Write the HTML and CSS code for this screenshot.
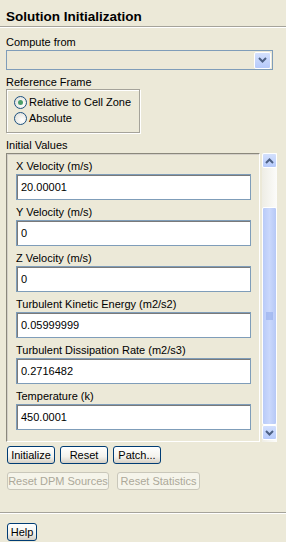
FILE: index.html
```html
<!DOCTYPE html>
<html lang="en">
<head>
  <meta charset="UTF-8">
  <title>Solution Initialization</title>
  <link rel="stylesheet" href="styles.css">
</head>
<body>

  <div class="title">Solution Initialization</div>

  <div class="section">
    <div class="label">Compute from</div>
    <div class="combo">
      <div class="combo-btn">
        <svg width="9" height="6" viewBox="0 0 9 6"><polyline points="1,1 4.5,4.5 8,1" fill="none" stroke="#4d6185" stroke-width="2"/></svg>
      </div>
    </div>

    <div class="label">Reference Frame</div>
    <div class="group">
      <div class="radio-row"><span class="radio checked"></span>Relative to Cell Zone</div>
      <div class="radio-row"><span class="radio"></span>Absolute</div>
    </div>

    <div class="label">Initial Values</div>
    <div class="scroll-area">
      <div class="pane">
        <div class="field">
          <div class="label">X Velocity (m/s)</div>
          <div class="input">20.00001</div>
        </div>
        <div class="field">
          <div class="label">Y Velocity (m/s)</div>
          <div class="input">0</div>
        </div>
        <div class="field">
          <div class="label">Z Velocity (m/s)</div>
          <div class="input">0</div>
        </div>
        <div class="field">
          <div class="label">Turbulent Kinetic Energy (m2/s2)</div>
          <div class="input">0.05999999</div>
        </div>
        <div class="field">
          <div class="label">Turbulent Dissipation Rate (m2/s3)</div>
          <div class="input">0.2716482</div>
        </div>
        <div class="field">
          <div class="label">Temperature (k)</div>
          <div class="input">450.0001</div>
        </div>
      </div>
      <div class="scrollbar">
        <div class="sb-btn">
          <svg width="9" height="6" viewBox="0 0 9 6"><polyline points="1,5 4.5,1.5 8,5" fill="none" stroke="#4d6185" stroke-width="2"/></svg>
        </div>
        <div class="sb-track">
          <div class="sb-space"></div>
          <div class="sb-thumb">
            <svg width="8" height="8" viewBox="0 0 8 8">
              <line x1="0" y1="1" x2="7" y2="1" stroke="#8aa5e8"/>
              <line x1="0" y1="3" x2="7" y2="3" stroke="#8aa5e8"/>
              <line x1="0" y1="5" x2="7" y2="5" stroke="#8aa5e8"/>
              <line x1="0" y1="7" x2="7" y2="7" stroke="#8aa5e8"/>
            </svg>
          </div>
        </div>
        <div class="sb-btn">
          <svg width="9" height="6" viewBox="0 0 9 6"><polyline points="1,1 4.5,4.5 8,1" fill="none" stroke="#4d6185" stroke-width="2"/></svg>
        </div>
      </div>
    </div>

    <div class="btn-row">
      <button class="btn">Initialize</button>
      <button class="btn">Reset</button>
      <button class="btn">Patch...</button>
    </div>
    <div class="btn-row">
      <button class="btn disabled wide">Reset DPM Sources</button>
      <button class="btn disabled stats">Reset Statistics</button>
    </div>
  </div>

  <div class="separator"></div>

  <div class="section">
    <button class="btn help">Help</button>
  </div>

</body>
</html>
```

FILE: styles.css
```css
body {
  margin: 0;
  width: 286px;
  height: 542px;
  background: #ece9d8;
  color: #000;
  font-family: Tahoma, "Liberation Sans", Arial, sans-serif;
  font-size: 11px;
  overflow: hidden;
}
.title {
  height: 26px;
  padding-left: 6px;
  font-size: 13.5px;
  font-weight: bold;
  border-bottom: 1px solid #a5a39a;
  box-shadow: 0 1px 0 #fff;
  line-height: 34px;
}
.section {
  padding: 0 6px;
}
.label {
  height: 13px;
  line-height: 13px;
}
.section > .label:first-child {
  margin-top: 9px;
}
.combo {
  margin-top: 1px;
  width: 264px;
  height: 18px;
  border: 1px solid #7f9db9;
  display: flex;
  justify-content: flex-end;
  align-items: center;
  padding-right: 1px;
}
.combo-btn, .sb-btn {
  width: 15px;
  height: 15px;
  border: 1px solid #fff;
  border-radius: 2px;
  background: linear-gradient(#d3e0fd, #b6cafb);
  display: flex;
  align-items: center;
  justify-content: center;
  box-sizing: border-box;
}
.combo-btn {
  width: 17px;
  height: 17px;
}
.combo + .label {
  margin-top: 6px;
}
.group {
  width: 134px;
  height: 44px;
  border: 1px solid #a5a39a;
  box-shadow: inset 1px 1px 0 #fff, 1px 1px 0 #fff;
  padding: 4px 0 0 7px;
  box-sizing: border-box;
}
.radio-row {
  display: flex;
  align-items: center;
  height: 16px;
}
.radio {
  width: 11px;
  height: 11px;
  border: 1px solid #1c5180;
  border-radius: 50%;
  background: radial-gradient(circle at 65% 65%, #fff, #dcdcd4);
  margin-right: 2px;
  display: flex;
  align-items: center;
  justify-content: center;
}
.radio.checked::after {
  content: "";
  width: 5px;
  height: 5px;
  border-radius: 50%;
  background: #4a9e6a;
}
.group + .label {
  margin-top: 6px;
}
.scroll-area {
  display: flex;
  gap: 2px;
  height: 289px;
  margin-top: 1px;
}
.pane {
  width: 254px;
  border-top: 1px solid #8a887c;
  border-left: 1px solid #8a887c;
  border-bottom: 1px solid #fff;
  border-right: 1px solid #fff;
  box-shadow: inset 1px 1px 0 #d4d0c8;
  box-sizing: border-box;
  padding: 6px 0 0 9px;
}
.field {
  height: 46px;
}
.field .input {
  margin-top: 1px;
  width: 235px;
  height: 26px;
  box-sizing: border-box;
  border: 1px solid #7f9db9;
  box-shadow: inset 1px 1px 0 #7a7a7a;
  background: #fff;
  padding: 0 0 0 4px;
  line-height: 24px;
}
.scrollbar {
  width: 15px;
  display: flex;
  flex-direction: column;
  background: linear-gradient(90deg, #eeede5, #fcfcfa);
  padding-bottom: 2px;
}
.sb-track {
  flex: 1;
  display: flex;
  flex-direction: column;
}
.sb-space {
  height: 39px;
}
.sb-thumb {
  flex: 1;
  border: 1px solid #fff;
  border-radius: 2px;
  background: linear-gradient(90deg, #b9cbf8, #cad8fc 50%, #b6c8f6);
  display: flex;
  align-items: center;
  justify-content: center;
}
.btn-row {
  display: flex;
  gap: 5px;
  margin-top: 4px;
}
.btn-row + .btn-row {
  margin-top: 8px;
}
.btn {
  font-family: inherit;
  font-size: 11px;
  color: #000;
  width: 48px;
  height: 18px;
  padding: 0;
  margin: 0;
  border: 1px solid #003c74;
  border-radius: 3px;
  background: linear-gradient(#fff, #f3f2ec 60%, #d6d0c5);
}
.btn:first-child {
  margin-left: 1px;
}
.btn.disabled {
  color: #aca899;
  border-color: #c9c7ba;
  background: #f5f4ea;
}
.btn.wide {
  width: 102px;
}
.btn.stats {
  width: 83px;
  margin-left: 3px;
}
.separator {
  margin-top: 22px;
  height: 0;
  border-top: 1px solid #a5a39a;
  border-bottom: 1px solid #fff;
}
.help {
  margin: 9px 0 0 1px;
  width: 30px;
}
```
